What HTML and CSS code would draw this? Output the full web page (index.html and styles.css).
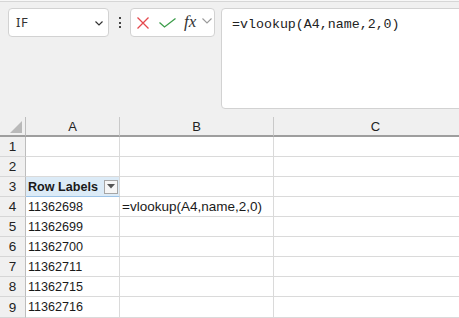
FILE: index.html
```html
<!DOCTYPE html>
<html>
<head>
<meta charset="utf-8">
<link rel="stylesheet" href="styles.css">
</head>
<body>
<div class="app">
  <div class="toolbar">
    <div class="namebox">
      <span class="name">IF</span>
      <svg class="chev" width="8" height="5" viewBox="0 0 8 5"><polyline points="0.5,0.5 4,4 7.5,0.5" fill="none" stroke="#333" stroke-width="1.2"/></svg>
    </div>
    <div class="more"><i></i><i></i><i></i></div>
    <div class="fxbox">
      <svg class="cancel" width="12" height="12" viewBox="0 0 12 12"><path d="M0.5 0.5 L11.5 11.5 M11.5 0.5 L0.5 11.5" stroke="#e5484d" stroke-width="1.3" fill="none"/></svg>
      <svg class="enter" width="17" height="10" viewBox="0 0 17 10"><polyline points="0.5,4.5 5.5,9 16.5,0.5" fill="none" stroke="#3c9d4a" stroke-width="1.3"/></svg>
      <span class="fx">fx</span>
      <svg class="fxchev" width="10" height="6" viewBox="0 0 10 6"><polyline points="0.5,0.5 5,5 9.5,0.5" fill="none" stroke="#9a9a9a" stroke-width="1.1"/></svg>
    </div>
    <div class="formula">=vlookup(A4,name,2,0)</div>
  </div>
  <div class="sheet">
    <div class="ch corner"><span class="tri"></span></div>
    <div class="ch">A</div>
    <div class="ch">B</div>
    <div class="ch">C</div>

    <div class="rh">1</div><div class="c"></div><div class="c"></div><div class="c"></div>
    <div class="rh">2</div><div class="c"></div><div class="c"></div><div class="c"></div>
    <div class="rh">3</div><div class="c pivot"><span class="bold">Row Labels</span><span class="dd"><svg width="8" height="5" viewBox="0 0 8 5"><polygon points="0,0 8,0 4,4.5" fill="#555"/></svg></span></div><div class="c"></div><div class="c"></div>
    <div class="rh">4</div><div class="c">11362698</div><div class="c edit">=vlookup(A4,name,2,0)</div><div class="c"></div>
    <div class="rh">5</div><div class="c">11362699</div><div class="c"></div><div class="c"></div>
    <div class="rh">6</div><div class="c">11362700</div><div class="c"></div><div class="c"></div>
    <div class="rh">7</div><div class="c">11362711</div><div class="c"></div><div class="c"></div>
    <div class="rh">8</div><div class="c">11362715</div><div class="c"></div><div class="c"></div>
    <div class="rh last">9</div><div class="c last">11362716</div><div class="c last"></div><div class="c last"></div>
  </div>
</div>
</body>
</html>
```

FILE: styles.css
```css
* { box-sizing: border-box; }
html, body { margin: 0; padding: 0; }
body {
  width: 459px;
  height: 318px;
  overflow: hidden;
  background: #ffffff;
  font-family: "Liberation Sans", Arial, sans-serif;
}
.app {
  padding-top: 1px;
  background: #f7f7f7;
}
.toolbar {
  height: 116px;
  border-top: 1px solid #d6d6d6;
  background: #f0f0f0;
  display: flex;
  align-items: flex-start;
  padding: 6px 0 0 8px;
}
.namebox {
  width: 101px;
  height: 29px;
  background: #fff;
  border: 1px solid #d2d2d2;
  border-radius: 4px;
  display: flex;
  align-items: center;
  justify-content: space-between;
  padding: 0 5px 0 7px;
}
.name {
  font-family: "Noto Sans", "Liberation Sans", sans-serif;
  font-size: 13px;
  color: #333;
  letter-spacing: 0.5px;
  margin-top: -1px;
}
.chev { margin-top: 2px; }
.more {
  width: 21px;
  height: 29px;
  display: flex;
  flex-direction: column;
  align-items: center;
  justify-content: center;
  gap: 2.5px;
}
.more i {
  display: block;
  width: 2px;
  height: 2px;
  background: #444;
}
.fxbox {
  width: 85px;
  height: 29px;
  background: #fff;
  border: 1px solid #d2d2d2;
  border-radius: 4px;
  display: flex;
  align-items: center;
  padding-left: 6px;
}
.enter { margin-left: 10px; margin-top: 1px; }
.fx {
  margin-left: 8px;
  font-family: "Liberation Serif", "DejaVu Serif", serif;
  font-style: italic;
  font-size: 17px;
  color: #333;
  margin-top: -2px;
}
.fxchev { margin-left: 6px; margin-top: -3px; }
.formula {
  flex: 1;
  margin-left: 6px;
  margin-right: -4px;
  height: 101px;
  background: #fff;
  border: 1px solid #d2d2d2;
  border-radius: 4px;
  padding: 8px 0 0 10px;
  font-family: "Liberation Mono", "DejaVu Sans Mono", monospace;
  font-size: 13.3px;
  line-height: 16px;
  color: #222;
}
.sheet {
  width: 478px;
  display: grid;
  grid-template-columns: 26px 94px 154px 1fr;
  grid-auto-rows: 20px;
  font-size: 12.6px;
  color: #1a1a1a;
}
.ch {
  background: #f0f0f0;
  border-right: 1px solid #c9c9c9;
  border-bottom: 2px solid #9e9e9e;
  display: flex;
  align-items: center;
  justify-content: center;
  font-size: 13px;
  color: #222;
  padding-top: 1px;
}
.corner {
  justify-content: flex-end;
  align-items: flex-end;
  padding: 0 3px 2px 0;
  border-right-color: #bdbdbd;
}
.tri {
  display: block;
  width: 12px;
  height: 12px;
  background: #b9b9b9;
  clip-path: polygon(100% 0, 100% 100%, 0 100%);
}
.rh {
  background: #f0f0f0;
  border-right: 1px solid #bdbdbd;
  border-bottom: 1px solid #d6d6d6;
  display: flex;
  align-items: center;
  justify-content: center;
  font-size: 13.5px;
  color: #222;
}
.c {
  background: #fff;
  border-right: 1px solid #dadada;
  border-bottom: 1px solid #dadada;
  display: flex;
  align-items: center;
  padding-left: 2px;
  white-space: nowrap;
}
.sheet .last { height: 21px; }
.pivot {
  background: #dcebf7;
  border-bottom: 1px solid #9dc3e6;
  justify-content: space-between;
  padding-right: 1px;
}
.bold { font-weight: bold; }
.dd {
  width: 14px;
  height: 14px;
  background: #f6f6f6;
  border: 1px solid #a6a6a6;
  display: flex;
  align-items: center;
  justify-content: center;
}
.edit { font-size: 13.5px; }
```
